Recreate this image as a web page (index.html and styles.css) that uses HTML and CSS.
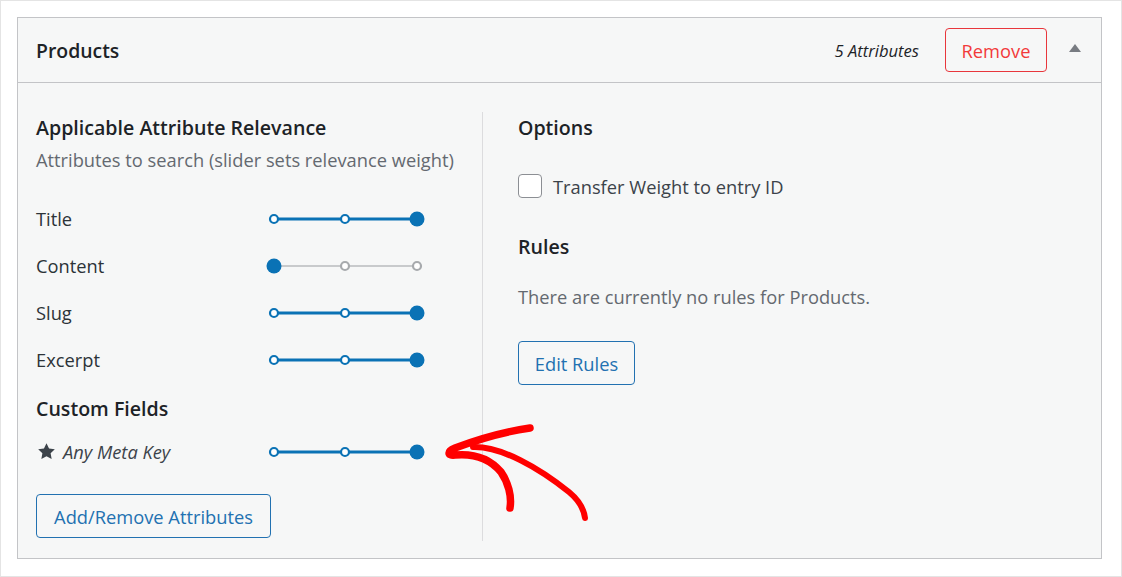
FILE: index.html
```html
<!DOCTYPE html>
<html lang="en">
<head>
<meta charset="utf-8">
<title>Products</title>
<link rel="stylesheet" href="styles.css">
</head>
<body>
<div class="page">
  <div class="card">
    <div class="card-head">
      <h2 class="card-title">Products</h2>
      <div class="head-right">
        <span class="attr-count">5 Attributes</span>
        <button class="btn btn-remove">Remove</button>
        <span class="toggle" aria-hidden="true"></span>
      </div>
    </div>
    <div class="card-body">
      <div class="col-left">
        <h3 class="sec-title">Applicable Attribute Relevance</h3>
        <p class="sec-desc">Attributes to search (slider sets relevance weight)</p>
        <div class="rows">
          <div class="row"><span class="row-label">Title</span>
            <svg class="slider" width="160" height="20" viewBox="0 0 160 20"><line x1="8" y1="10" x2="151" y2="10" stroke="#0a72b5" stroke-width="3"/><circle cx="8" cy="10" r="4" fill="#fff" stroke="#0a72b5" stroke-width="2.2"/><circle cx="79" cy="10" r="4" fill="#fff" stroke="#0a72b5" stroke-width="2.2"/><circle cx="151" cy="10" r="7.5" fill="#0a72b5"/></svg>
          </div>
          <div class="row"><span class="row-label">Content</span>
            <svg class="slider" width="160" height="20" viewBox="0 0 160 20"><line x1="8" y1="10" x2="151" y2="10" stroke="#c8cacc" stroke-width="2"/><circle cx="79" cy="10" r="4" fill="#fff" stroke="#a7aaad" stroke-width="2.2"/><circle cx="151" cy="10" r="4" fill="#fff" stroke="#a7aaad" stroke-width="2.2"/><circle cx="8" cy="10" r="7.5" fill="#0a72b5"/></svg>
          </div>
          <div class="row"><span class="row-label">Slug</span>
            <svg class="slider" width="160" height="20" viewBox="0 0 160 20"><line x1="8" y1="10" x2="151" y2="10" stroke="#0a72b5" stroke-width="3"/><circle cx="8" cy="10" r="4" fill="#fff" stroke="#0a72b5" stroke-width="2.2"/><circle cx="79" cy="10" r="4" fill="#fff" stroke="#0a72b5" stroke-width="2.2"/><circle cx="151" cy="10" r="7.5" fill="#0a72b5"/></svg>
          </div>
          <div class="row"><span class="row-label">Excerpt</span>
            <svg class="slider" width="160" height="20" viewBox="0 0 160 20"><line x1="8" y1="10" x2="151" y2="10" stroke="#0a72b5" stroke-width="3"/><circle cx="8" cy="10" r="4" fill="#fff" stroke="#0a72b5" stroke-width="2.2"/><circle cx="79" cy="10" r="4" fill="#fff" stroke="#0a72b5" stroke-width="2.2"/><circle cx="151" cy="10" r="7.5" fill="#0a72b5"/></svg>
          </div>
        </div>
        <h3 class="sec-title cf-title">Custom Fields</h3>
        <div class="row cf-row"><span class="row-label meta"><svg class="star" width="19" height="19" viewBox="0 0 24 24"><path d="M12 1.5l3.2 6.7 7.3 1-5.3 5.1 1.3 7.3L12 18.1l-6.5 3.5 1.3-7.3-5.3-5.1 7.3-1z" fill="#3c434a"/></svg><em>Any Meta Key</em></span>
          <svg class="slider" width="160" height="20" viewBox="0 0 160 20"><line x1="8" y1="10" x2="151" y2="10" stroke="#0a72b5" stroke-width="3"/><circle cx="8" cy="10" r="4" fill="#fff" stroke="#0a72b5" stroke-width="2.2"/><circle cx="79" cy="10" r="4" fill="#fff" stroke="#0a72b5" stroke-width="2.2"/><circle cx="151" cy="10" r="7.5" fill="#0a72b5"/></svg>
        </div>
        <button class="btn btn-outline btn-attrs">Add/Remove Attributes</button>
      </div>
      <div class="col-right">
        <h3 class="sec-title">Options</h3>
        <label class="check-row"><span class="checkbox"></span><span>Transfer Weight to entry ID</span></label>
        <h3 class="sec-title rules-title">Rules</h3>
        <p class="rules-desc">There are currently no rules for Products.</p>
        <button class="btn btn-outline btn-rules">Edit Rules</button>
      </div>
    </div>
    <svg class="annot" width="160" height="120" viewBox="0 0 160 120" aria-hidden="true">
      <path d="M101 20 C 80 23, 50 31, 26 40 C 18 43, 18 48, 26 47 C 48 45, 62 52, 72 64 C 79 74, 83 88, 81 100" fill="none" stroke="#f00" stroke-width="7.5" stroke-linecap="round" stroke-linejoin="round"/>
      <path d="M44 39 C 72 38, 110 60, 140 84 C 152 94, 155 102, 156 110" fill="none" stroke="#f00" stroke-width="6" stroke-linecap="round"/>
    </svg>
  </div>
</div>
</body>
</html>
```
FILE: styles.css
```css
* { box-sizing: border-box; }
html, body { margin: 0; padding: 0; }
body {
  background: #fff;
  font-family: "Open Sans", "Noto Sans", sans-serif;
  color: #2c3338;
}
.page {
  width: 1122px;
  height: 577px;
  border: 1px solid #e4e4e4;
  padding: 16px 20px 0 16px;
}
.card {
  position: relative;
  width: 1085px;
  height: 542px;
  background: #f6f7f7;
  border: 1px solid #c3c4c7;
}
.card-head {
  height: 65px;
  border-bottom: 1px solid #c3c4c7;
  display: flex;
  align-items: center;
  justify-content: space-between;
  padding: 0 20px 0 18px;
}
.card-title {
  margin: 0;
  font-size: 19.4px;
  font-weight: 600;
  color: #1d2327;
}
.head-right {
  display: flex;
  align-items: center;
}
.attr-count {
  font-style: italic;
  font-size: 16.6px;
  color: #1d2327;
  margin-right: 26px;
}
.btn {
  font-family: inherit;
  font-size: 18.3px;
  background: transparent;
  border-radius: 4px;
  border: 1px solid;
  height: 44px;
  padding: 0;
  cursor: pointer;
}
.btn-remove {
  color: #f23a3a;
  border-color: #e8363c;
  width: 102px;
}
.toggle {
  width: 0;
  height: 0;
  border-left: 6px solid transparent;
  border-right: 6px solid transparent;
  border-bottom: 8px solid #787c82;
  margin-left: 22px;
  margin-top: -4px;
}
.card-body {
  display: flex;
  padding: 29px 0 17px 18px;
  height: 475px;
}
.col-left {
  width: 447px;
  border-right: 1px solid #dcdcde;
  display: flex;
  flex-direction: column;
  align-items: flex-start;
}
.col-right {
  padding-left: 35px;
  display: flex;
  flex-direction: column;
  align-items: flex-start;
}
.sec-title {
  margin: 0;
  font-size: 19.6px;
  font-weight: 600;
  line-height: 32px;
  color: #1d2327;
}
.sec-desc {
  margin: 0;
  font-size: 18.3px;
  line-height: 32px;
  color: #646970;
}
.rows {
  margin-top: 19px;
  display: flex;
  flex-direction: column;
}
.row {
  display: flex;
  align-items: center;
  height: 47px;
}
.row-label {
  width: 230px;
  font-size: 18.3px;
  line-height: 26px;
  color: #2c3338;
  display: flex;
  align-items: center;
}
.slider { display: block; }
.cf-title { margin-top: 10px; }
.cf-row { margin-top: 3px; }
.meta em { font-style: italic; color: #3c434a; }
.star { margin: 0 7px 0 1px; }
.btn-outline {
  color: #2271b1;
  border-color: #2271b1;
}
.btn-attrs {
  margin-top: 19px;
  width: 235px;
}
.check-row {
  display: flex;
  align-items: center;
  height: 24px;
  margin-top: 30px;
  font-size: 18.3px;
  color: #3c434a;
}
.checkbox {
  width: 24px;
  height: 24px;
  border: 1px solid #8c8f94;
  border-radius: 4px;
  background: #fff;
  margin-right: 11px;
}
.rules-title { margin-top: 33px; }
.rules-desc {
  margin: 18px 0 0;
  font-size: 18.3px;
  line-height: 32px;
  color: #646970;
}
.btn-rules {
  margin-top: 28px;
  width: 117px;
}
.annot {
  position: absolute;
  left: 411px;
  top: 390px;
}
```
